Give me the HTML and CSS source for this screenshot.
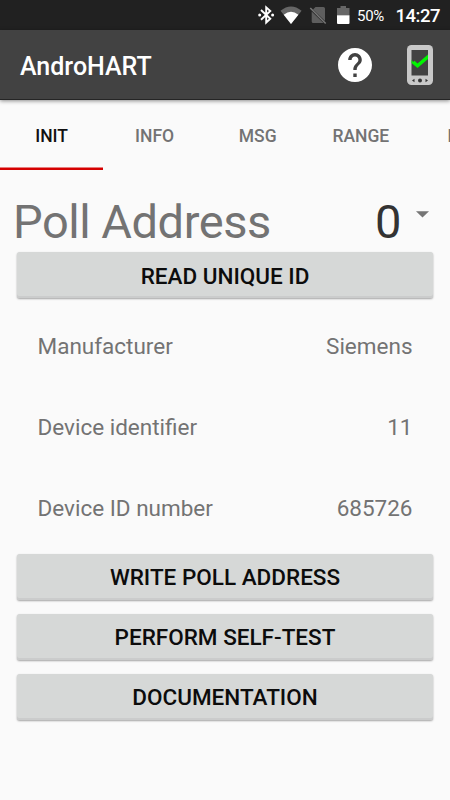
FILE: index.html
```html
<!DOCTYPE html>
<html lang="en">
<head>
<meta charset="utf-8">
<title>AndroHART</title>
<link rel="stylesheet" href="styles.css">
</head>
<body>
<div class="status">
  <svg class="status-icons" width="100" height="30" viewBox="0 0 100 30">
    <g fill="none" stroke="#fff" stroke-width="1.900"><path d="M11 10L20.300 18.800L16.200 22.500V7.300L20.300 11L11 19.800"/></g>
    <g fill="#fff"><circle cx="9.7" cy="15" r="1.5"/><circle cx="22.6" cy="15" r="1.5"/></g>
    <path d="M30.5 10.8Q41 2.2 51.6 10.8L41 24Z" fill="#666"/>
    <path d="M33.7 14.7Q41 8.8 48.4 14.7L41 24Z" fill="#fff"/>
    <path d="M65.5 7H73.4Q75 7 75 8.6V21L63 9.5ZM61.7 11.5L73.5 23H63.3Q61.7 23 61.7 21.4Z" fill="#5e5e5e"/>
    <path d="M60.3 8L75.7 23.5" stroke="#777" stroke-width="1.5"/>
    <path d="M90.500 6H96V8H99.500V15.300H87V8H90.500Z" fill="#666"/>
    <path d="M87 15.300H99.500V23Q99.500 24 98.500 24H88Q87 24 87 23Z" fill="#fff"/>
  </svg>
  <span class="battery">50%</span>
  <span class="clock">14:27</span>
</div>
<header class="bar">
  <h1>AndroHART</h1>
  <svg width="34" height="34" viewBox="2 2 20 20"><path fill="#fff" d="M12 2C6.48 2 2 6.48 2 12s4.480 10 10 10 10-4.480 10-10S17.520 2 12 2zm1 17h-2v-2h2v2zm2.070-7.750l-.9.920C13.450 12.900 13 13.500 13 15h-2v-.5c0-1.100.450-2.100 1.170-2.830l1.240-1.260c.370-.360.590-.860.590-1.410 0-1.100-.9-2-2-2s-2 .9-2 2H8c0-2.210 1.790-4 4-4s4 1.790 4 4c0 .880-.360 1.680-.930 2.250z"/></svg>
  <svg class="device" width="28" height="42" viewBox="0 0 28 42">
    <rect x="1" y="1" width="26" height="40" rx="4.500" fill="#c8c8c8"/>
    <rect x="5.500" y="6" width="16.500" height="25.500" fill="#424242"/>
    <path d="M5.500 15.500V19L11.500 24L22 15V10.500L11.500 19.500L8.500 16.800L7 18Z" fill="#00f500"/>
    <circle cx="14" cy="36.500" r="2" fill="#333"/>
    <path d="M8.500 34.700V38.300L6 36.500ZM19.500 34.700V38.300L22 36.500Z" fill="#333"/>
  </svg>
</header>
<nav class="tabs">
  <a class="tab active">INIT</a><a class="tab">INFO</a><a class="tab">MSG</a><a class="tab">RANGE</a><a class="tab last">LOOP</a>
</nav>
<main>
  <div class="poll"><span class="label">Poll Address</span><span class="value">0</span>
    <svg width="13" height="7" viewBox="0 0 13 7"><path d="M0 .3H13L6.500 6.500Z" fill="#757575"/></svg>
  </div>
  <button>READ UNIQUE ID</button>
  <dl>
    <div><dt>Manufacturer</dt><dd>Siemens</dd></div>
    <div><dt>Device identifier</dt><dd>11</dd></div>
    <div><dt>Device ID number</dt><dd>685726</dd></div>
  </dl>
  <div class="actions">
    <button>WRITE POLL ADDRESS</button>
    <button>PERFORM SELF-TEST</button>
    <button>DOCUMENTATION</button>
  </div>
</main>
</body>
</html>
```
FILE: styles.css
```css
* { box-sizing: border-box; }
body {
  margin: 0;
  width: 450px;
  height: 800px;
  overflow: hidden;
  background: #fafafa;
  color: #737373;
  font-family: Roboto, sans-serif;
}
svg { display: block; flex: none; }
.status {
  display: flex;
  align-items: center;
  height: 30px;
  padding-right: 10px;
  background: #212121;
  color: #fff;
}
.status-icons { margin-left: 250px; }
.battery { margin-left: 7px; font-size: 15px; letter-spacing: -.3px; line-height: 30px; padding-top: 1px; }
.clock { margin-left: auto; font-size: 18.500px; letter-spacing: -.5px; font-weight: 500; line-height: 30px; padding-top: 1px; }
.bar {
  position: relative;
  display: flex;
  align-items: center;
  height: 70px;
  padding: 0 16px 0 20px;
  background: #424242;
  border-bottom: 1px solid #252525;
  box-shadow: 0 1px 4px rgba(0, 0, 0, .45);
}
h1 { margin: 3px auto 0 0; color: #fff; font-size: 25px; font-weight: 500; }
.device { margin-left: 34px; }
.tabs { display: flex; height: 70px; overflow: hidden; }
.tab {
  flex: 0 0 103.100px;
  height: 70px;
  text-align: center;
  line-height: 72px;
  font-size: 17.500px;
  font-weight: 500;
}
.tab.active { color: #111; box-shadow: inset 0 -2.500px #d50000; }
.tab.last { text-align: left; padding-left: 35px; }
main { padding: 23px 17px 0; }
.poll {
  display: flex;
  height: 59px;
  margin: 0 -4px;
  font-size: 47px;
  line-height: 58px;
}
.poll .label { letter-spacing: -.46px; }
.poll .value { margin-left: auto; color: #333; }
.poll svg { margin: 18px 8px 0 14.500px; }
button {
  display: block;
  width: 100%;
  height: 46px;
  padding: 1px 0 0;
  border: 0;
  border-radius: 2.500px;
  background: #d6d8d7;
  color: #0c0c0c;
  font: 500 22.500px/44px Roboto, sans-serif;
  box-shadow: 0 1px 2px rgba(0, 0, 0, .35), inset 0 -2px #cbcccc;
}
dl { margin: 7px 20.500px 6.300px; }
dl div { display: flex; justify-content: space-between; height: 80.900px; line-height: 82px; font-size: 22.500px; }
dd { margin: 0; }
.actions { display: grid; gap: 14px; }
```
